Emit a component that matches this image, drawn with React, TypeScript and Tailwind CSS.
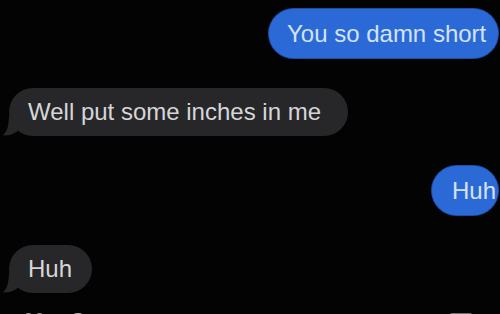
import React from "react";

const Tail = () => (
  <svg
    className="absolute left-[-7px] bottom-0"
    width="22"
    height="22"
    viewBox="0 0 22 22"
  >
    <path d="M7 2 Q7 16 1 21.5 Q10 22 17 16 L17 2 Z" fill="#27272a" />
  </svg>
);

const Sent = ({ text, w, pl }: { text: string; w: string; pl: string }) => (
  <div className="flex justify-end pr-[2px]">
    <div
      className={`${w} ${pl} h-[49px] flex items-center rounded-full bg-[#2b6ad6] text-[#d3e3f7] text-[24px] shadow-[0_0_0_1px_#1c4ea8]`}
    >
      {text}
    </div>
  </div>
);

const Received = ({ text, w, pl }: { text: string; w: string; pl: string }) => (
  <div className="flex pl-[9px]">
    <div
      className={`relative ${w} ${pl} h-[48px] flex items-center rounded-full bg-[#27272a] text-[#d6d6d8] text-[24px]`}
    >
      <Tail />
      <span className="relative">{text}</span>
    </div>
  </div>
);

export default function App() {
  return (
    <div
      className="h-[314px] w-[500px] overflow-hidden bg-[#030303] flex flex-col pt-[9px] gap-[30px]"
      style={{ fontFamily: '"Liberation Sans", Arial, sans-serif' }}
    >
      <Sent text="You so damn short" w="w-[229px]" pl="pl-[18px]" />
      <Received text="Well put some inches in me" w="w-[339px]" pl="pl-[19px]" />
      <Sent text="Huh" w="w-[66px]" pl="pl-[20px]" />
      <Received text="Huh" w="w-[83px]" pl="pl-[19px]" />
      <div className="flex items-start justify-between px-[25px] mt-[-10px]">
        <div className="flex gap-[30px]">
          <div className="flex gap-[4px]">
            <div className="w-[7px] h-[8px] rounded-full bg-[#9a9a9a]" />
            <div className="w-[7px] h-[8px] rounded-full bg-[#9a9a9a]" />
          </div>
          <div className="w-[10px] h-[8px] rounded-full bg-[#b0b0b0]" />
        </div>
        <div className="w-[22px] h-[8px] mr-[3px] bg-[#707070] rounded-[2px]" />
      </div>
    </div>
  );
}
